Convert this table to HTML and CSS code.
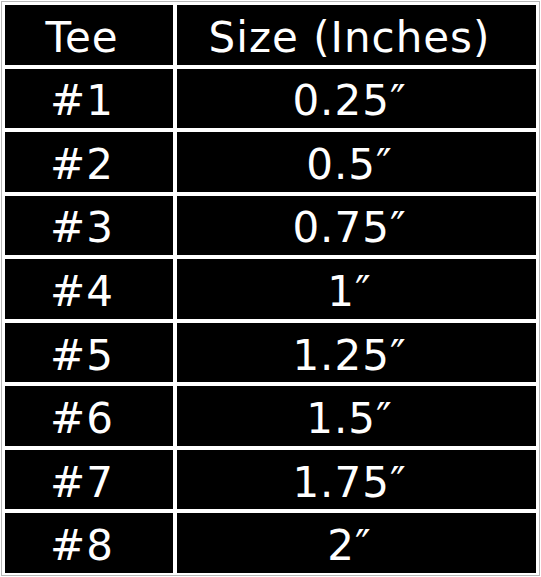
FILE: index.html
```html
<!DOCTYPE html>
<html>
<head>
<meta charset="utf-8">
<link rel="stylesheet" href="styles.css">
</head>
<body>
<div class="page">
  <div class="table">
    <div class="cell">Tee</div><div class="cell">Size (Inches)</div>
    <div class="cell">#1</div><div class="cell">0.25″</div>
    <div class="cell">#2</div><div class="cell">0.5″</div>
    <div class="cell">#3</div><div class="cell">0.75″</div>
    <div class="cell">#4</div><div class="cell">1″</div>
    <div class="cell">#5</div><div class="cell">1.25″</div>
    <div class="cell">#6</div><div class="cell">1.5″</div>
    <div class="cell">#7</div><div class="cell">1.75″</div>
    <div class="cell">#8</div><div class="cell">2″</div>
  </div>
</div>
</body>
</html>
```
FILE: styles.css
```css
html, body {
  margin: 0;
  padding: 0;
  background: #fff;
}
.page {
  width: 541px;
  height: 577px;
  box-sizing: border-box;
  padding: 1px;
}
.table {
  height: 100%;
  box-sizing: border-box;
  border: 1px solid #b8b8b8;
  padding: 3px 3px 2px 3px;
  display: grid;
  grid-template-columns: 168px 359px;
  grid-template-rows: repeat(9, 1fr);
  gap: 4px;
  background: #fff;
}
.cell {
  background: #000;
  color: #fff;
  font-family: "DejaVu Sans", Verdana, sans-serif;
  font-size: 42px;
  letter-spacing: 1px;
  display: flex;
  align-items: center;
  justify-content: center;
  padding-top: 5px;
  padding-right: 14px;
  box-sizing: border-box;
}
```
